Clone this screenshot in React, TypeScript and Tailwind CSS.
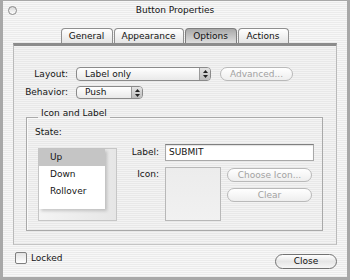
import React from "react";

const Arrows = () => (
  <svg width="5" height="8" viewBox="0 0 5 8">
    <path d="M2.5 0 L5 3 L0 3 Z" fill="#222" />
    <path d="M2.5 8 L5 5 L0 5 Z" fill="#222" />
  </svg>
);

function Popup({ w, h, label }: { w: string; h: string; label: string }) {
  return (
    <div className={`flex ${w} ${h} rounded-[4px] border border-[#8a8a8a] bg-gradient-to-b from-white to-[#e9e9e9] overflow-hidden`}>
      <span className="flex-1 pl-[8px] flex items-center">{label}</span>
      <span className="w-[11px] border-l border-[#9a9a9a] bg-gradient-to-b from-[#e4e4e4] to-[#bcbcbc] flex items-center justify-center">
        <Arrows />
      </span>
    </div>
  );
}

function PillButton({ w, label, disabled }: { w: string; label: string; disabled?: boolean }) {
  return (
    <div
      className={`${w} h-[14px] rounded-full border flex items-center justify-center ${
        disabled
          ? "border-[#b9b9b9] bg-gradient-to-b from-white to-[#eeeeee] text-[#a2a2a2]"
          : "border-[#7a7a7a] bg-gradient-to-b from-white via-[#e8e8e8] to-[#f8f8f8] text-[#111]"
      }`}
    >
      {label}
    </div>
  );
}

function Tab({ w, label, active }: { w: string; label: string; active?: boolean }) {
  return (
    <div
      className={`${w} h-[15px] rounded-t-[4px] border border-b-0 flex items-center justify-center ${
        active
          ? "border-[#7e7e7e] bg-gradient-to-b from-[#a9a9a9] to-[#dedede] text-[#111]"
          : "border-[#8f8f8f] bg-gradient-to-b from-white to-[#e4e4e4] text-[#111]"
      }`}
    >
      {label}
    </div>
  );
}

export default function App() {
  return (
    <div className="w-[350px] h-[280px] border-x-[3px] border-t border-b-[3px] border-[#a8a8a8] bg-[repeating-linear-gradient(to_bottom,#f7f7f7_0px,#f7f7f7_1px,#ebebeb_1px,#ebebeb_2px)] font-['DejaVu_Sans',sans-serif] text-[9px] leading-[11px] text-[#151515] flex flex-col">
      {/* title bar */}
      <div className="h-[18px] flex items-center px-[5px]">
        <div className="w-[9px] h-[9px] rounded-full border border-[#8a8a8a] bg-gradient-to-b from-[#d8d8d8] to-white" />
        <div className="flex-1 text-center">Button Properties</div>
        <div className="w-[9px]" />
      </div>

      {/* tabs */}
      <div className="mt-[9px] flex justify-center gap-[1px] pr-[1px]">
        <Tab w="w-[52px]" label="General" />
        <Tab w="w-[70px]" label="Appearance" />
        <Tab w="w-[52px]" label="Options" active />
        <Tab w="w-[51px]" label="Actions" />
      </div>

      {/* panel */}
      <div className="mx-[10px] h-[202px] border-t-[3px] border-t-[#8c8c8c] border-x border-b border-x-[#bababa] border-b-[#c4c4c4] bg-[repeating-linear-gradient(to_bottom,#f3f3f3_0px,#f3f3f3_1px,#e8e8e8_1px,#e8e8e8_2px)] pt-[21px] flex flex-col">
        <div className="flex items-center">
          <div className="w-[54px] text-right">Layout:</div>
          <div className="ml-[8px]">
            <Popup w="w-[135px]" h="h-[14px]" label="Label only" />
          </div>
          <div className="ml-[9px]">
            <PillButton w="w-[73px]" label="Advanced..." disabled />
          </div>
        </div>
        <div className="flex items-center mt-[5px]">
          <div className="w-[54px] text-right">Behavior:</div>
          <div className="ml-[8px]">
            <Popup w="w-[67px]" h="h-[13px]" label="Push" />
          </div>
        </div>

        <fieldset className="mt-[10px] ml-[12px] w-[297px] h-[122px] border border-[#a9a9a9] shadow-[inset_1px_1px_0_#fafafa]">
          <legend className="ml-[11px] px-[3px] leading-[9px] pb-[7px]">Icon and Label</legend>
          <div className="flex">
            <div className="flex flex-col pl-[8px]">
              <div className="mt-[2px]">State:</div>
              <div className="mt-[10px] ml-[3px] w-[79px] h-[73px] border border-[#c6c6c6] bg-gradient-to-r from-[#f4f4f4] to-[#e6e6e6]">
                <div className="w-[66px] h-[60px] bg-white shadow-[2px_2px_3px_rgba(0,0,0,0.18)] flex flex-col">
                  <div className="h-[17px] bg-[#c5c5c5] pl-[11px] flex items-center">Up</div>
                  <div className="h-[17px] pl-[11px] flex items-center">Down</div>
                  <div className="h-[17px] pl-[11px] flex items-center">Rollover</div>
                </div>
              </div>
            </div>
            <div className="mt-[19px] grid grid-cols-[42px_auto] gap-x-[6px] gap-y-[6px] content-start">
              <div className="text-right self-center">Label:</div>
              <div className="w-[149px] h-[17px] border border-[#a8a8a8] border-t-[#7f7f7f] bg-white pl-[3px] flex items-center shadow-[inset_0_1px_1px_rgba(0,0,0,0.12)]">
                SUBMIT
              </div>
              <div className="text-right pt-[2px]">Icon:</div>
              <div className="flex gap-[6px]">
                <div className="w-[56px] h-[54px] border border-[#b8b8b8] bg-gradient-to-b from-[#ececec] to-[#f1f1f1]" />
                <div className="flex flex-col gap-[6px] pt-[1px]">
                  <PillButton w="w-[85px]" label="Choose Icon..." disabled />
                  <PillButton w="w-[85px]" label="Clear" disabled />
                </div>
              </div>
            </div>
          </div>
        </fieldset>
      </div>

      {/* footer */}
      <div className="mt-[7px] flex items-start">
        <div className="ml-[12px] w-[12px] h-[12px] rounded-[2px] border border-[#7f7f7f] bg-gradient-to-b from-[#e2e2e2] to-white" />
        <div className="ml-[4px] leading-[12px]">Locked</div>
        <div className="flex-1" />
        <div className="mr-[10px] mt-[2px]">
          <div className="w-[62px] h-[15px] rounded-full border border-[#727272] bg-gradient-to-b from-white via-[#e6e6e6] to-[#f6f6f6] flex items-center justify-center text-[#111]">
            Close
          </div>
        </div>
      </div>
    </div>
  );
}
